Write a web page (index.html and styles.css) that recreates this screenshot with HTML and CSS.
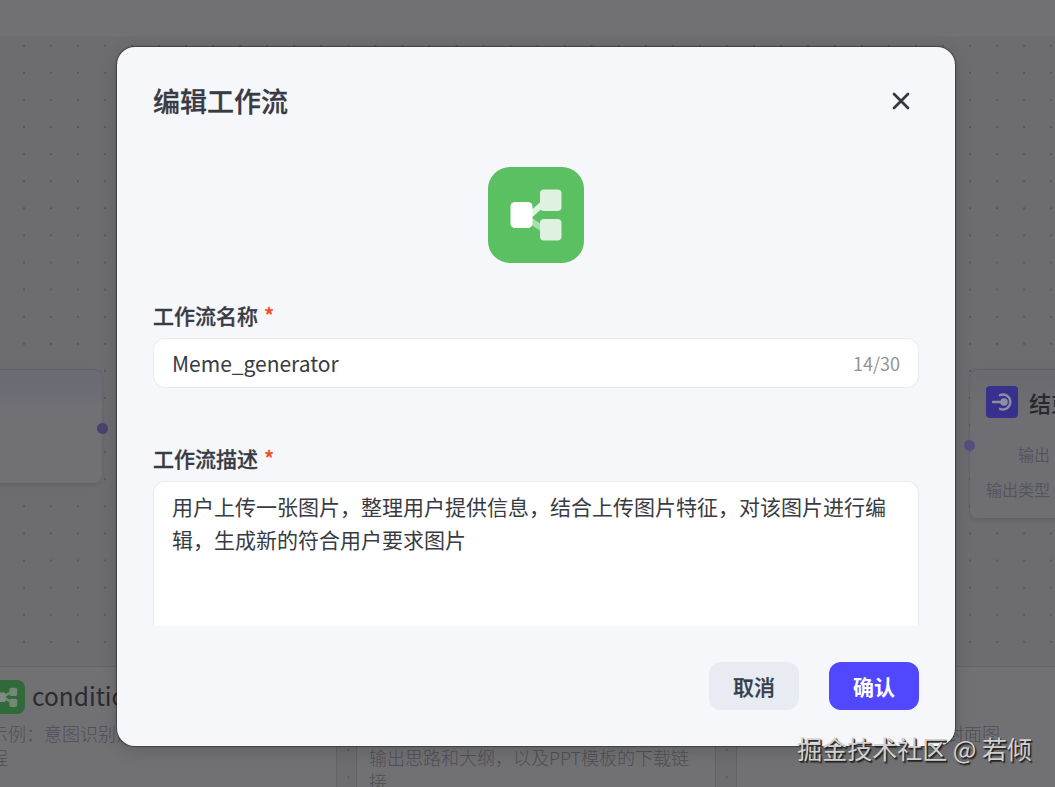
FILE: index.html
```
<!DOCTYPE html>
<html lang="zh-CN">
<head>
    <meta charset="UTF-8">
    <meta name="viewport" content="width=device-width, initial-scale=1.0">
    <title>编辑工作流</title>
    <link rel="stylesheet" href="styles.css">
</head>
<body>
    <div class="canvas">
        <div class="topbar"></div>

        <div class="node node-start"></div>
        <span class="port port-out"></span>

        <div class="node node-end">
            <div class="node-head">
                <svg class="end-icon" viewBox="0 0 32 32">
                    <rect width="32" height="32" rx="4" fill="#37308c"/>
                    <path d="M14 9.2A7.4 7.4 0 1 1 14 22.8M7 16h8" fill="none" stroke="#8d8da4" stroke-width="2.4" stroke-linecap="round"/>
                    <circle cx="18" cy="16" r="3.8" fill="#8d8da4"/>
                </svg>
                <span>结束</span>
            </div>
            <div class="node-row">输出</div>
            <div class="node-row">输出类型</div>
        </div>
        <span class="port port-in"></span>

        <div class="card card-left">
            <div class="card-head">
                <svg class="card-icon" viewBox="0 0 96 96">
                    <rect width="96" height="96" rx="22" fill="#30693a"/>
                    <path d="M34 48L62 31M34 48L62 65" stroke="#728975" stroke-width="7"/>
                    <rect x="52" y="22" width="22" height="23" rx="5" fill="#728975"/>
                    <rect x="52" y="53" width="22" height="23" rx="5" fill="#728975"/>
                    <rect x="12" y="35" width="30" height="27" rx="5" fill="#838984"/>
                </svg>
                <span>condition</span>
            </div>
            <p class="card-desc">示例：意图识别流<br>程</p>
        </div>
        <div class="card card-middle">
            <p class="card-desc">输出思路和大纲，以及PPT模板的下载链<br>接</p>
        </div>
        <div class="card card-right">
            <p class="card-desc">封面图</p>
        </div>
    </div>

    <div class="modal">
        <div class="modal-header">
            <h1>编辑工作流</h1>
            <button class="close" type="button" aria-label="关闭">
                <svg viewBox="0 0 20 20">
                    <path d="M3 3L17 17M17 3L3 17" stroke="#34373d" stroke-width="2.7" stroke-linecap="round"/>
                </svg>
            </button>
        </div>

        <svg class="logo" viewBox="0 0 96 96">
            <rect width="96" height="96" rx="22" fill="#5bc062"/>
            <path d="M40 52L58 64" stroke="#aadfae" stroke-width="6"/>
            <path d="M40 50L58 34" stroke="#def2df" stroke-width="6"/>
            <rect x="52" y="22.5" width="21.5" height="21.5" rx="4" fill="#def2df"/>
            <rect x="52" y="52" width="21.5" height="21.5" rx="4" fill="#def2df"/>
            <rect x="22.5" y="35" width="22" height="26" rx="4.5" fill="#fff"/>
        </svg>

        <form class="form">
            <div class="label">工作流名称<span class="required">*</span></div>
            <div class="input">
                <span>Meme_generator</span>
                <span class="count">14/30</span>
            </div>
            <div class="label">工作流描述<span class="required">*</span></div>
            <div class="textarea">用户上传一张图片，整理用户提供信息，结合上传图片特征，对该图片进行编辑，生成新的符合用户要求图片</div>
        </form>

        <div class="modal-footer">
            <button class="btn" type="button">取消</button>
            <button class="btn btn-primary" type="button">确认</button>
        </div>
    </div>

    <div class="watermark">掘金技术社区 @ 若倾</div>
</body>
</html>
```
FILE: styles.css
```
* {
    box-sizing: border-box;
}
body {
    margin: 0;
    height: 787px;
    overflow: hidden;
    position: relative;
    font-family: "Noto Sans CJK SC", sans-serif;
    color: #383b43;
}
button {
    font-family: inherit;
    border: none;
    padding: 0;
    cursor: pointer;
}
p {
    margin: 0;
}

/* canvas behind the dialog */
.canvas {
    position: absolute;
    inset: 0;
    overflow: hidden;
    background-color: #6d6c71;
    background-image: radial-gradient(circle, #57575c 0.7px, transparent 1.1px);
    background-size: 27.04px 27.1px;
    background-position: 10.5px 32.2px;
}
.topbar {
    height: 37px;
    background: #717075;
    border-bottom: 1px solid #6f6e73;
}
.node {
    position: absolute;
    border-radius: 8px;
    border-top: 1px solid #606066;
    box-shadow: 0 2px 5px rgba(0, 0, 0, 0.12);
}
.node-start {
    left: -20px;
    top: 369px;
    width: 122px;
    height: 114px;
    background: linear-gradient(#6a6a75, #6e6e75 30px, #717175 36px);
}
.node-end {
    left: 970px;
    top: 369px;
    width: 180px;
    height: 149px;
    padding: 16px 15px;
    background: linear-gradient(#69696f, #6f6f73 50px);
}
.node-head {
    display: flex;
    align-items: center;
    gap: 11px;
    height: 32px;
    margin: 0 0 19px 1px;
    font-size: 22px;
    font-weight: 500;
    color: #28282c;
}
.end-icon {
    flex: none;
    width: 32px;
    height: 32px;
}
.node-row {
    width: 65px;
    height: 35px;
    line-height: 35px;
    font-size: 16px;
    text-align: right;
    color: #55555b;
}
.port {
    position: absolute;
    width: 11px;
    height: 11px;
    border-radius: 50%;
}
.port-out {
    left: 97px;
    top: 423px;
    background: #48436f;
}
.port-in {
    left: 964px;
    top: 440px;
    background: #55517f;
}
.card {
    position: absolute;
    top: 666px;
    height: 140px;
    background: #717174;
    border: 1px solid #626267;
}
.card-left {
    left: -30px;
    width: 367px;
    padding: 12px 20px;
}
.card-middle {
    left: 356px;
    width: 360px;
    padding: 78px 12px 0;
}
.card-right {
    left: 736px;
    width: 350px;
    padding: 54px 0 0 209px;
}
.card-head {
    display: flex;
    align-items: center;
    gap: 7px;
    height: 36px;
    font-size: 24.5px;
    color: #2b2b2f;
}
.card-head span {
    margin-top: -4px;
}
.card-icon {
    width: 34px;
    height: 34px;
}
.card-desc {
    font-size: 18px;
    line-height: 24px;
    font-weight: 300;
    color: #4f4f54;
}
.card-left .card-desc {
    margin: 6px 0 0 -1px;
}

/* dialog */
.modal {
    position: absolute;
    left: 117px;
    top: 47px;
    width: 838px;
    height: 699px;
    padding: 36px;
    display: flex;
    flex-direction: column;
    background: #f6f7fb;
    border-radius: 18px;
    box-shadow: 0 0 1px 1px rgba(30, 30, 35, 0.5), 0 4px 18px rgba(0, 0, 0, 0.16);
}
.modal-header {
    display: flex;
    justify-content: space-between;
    align-items: center;
    height: 36px;
}
.modal-header h1 {
    margin: 0;
    font-size: 27px;
    font-weight: 500;
    line-height: 36px;
    -webkit-text-stroke: 0.3px;
}
.close {
    width: 36px;
    height: 36px;
    display: flex;
    align-items: center;
    justify-content: center;
    background: none;
}
.close svg {
    width: 20px;
    height: 20px;
}
.logo {
    flex: none;
    width: 96px;
    height: 96px;
    margin: 48px auto 37px;
}
.label {
    height: 30px;
    margin-bottom: 8px;
    font-size: 21px;
    line-height: 30px;
    font-weight: 500;
    -webkit-text-stroke: 0.3px;
}
.required {
    margin-left: 6px;
    color: #f54b23;
}
.input {
    display: flex;
    justify-content: space-between;
    align-items: center;
    height: 50px;
    margin-bottom: 55px;
    padding: 0 18px;
    background: #fff;
    border: 1px solid #e9eaef;
    border-radius: 12px;
    font-size: 21px;
}
.count {
    font-size: 18px;
    color: #92939a;
}
.textarea {
    height: 145px;
    padding: 8px 18px;
    background: #fff;
    border: 1px solid #e9eaef;
    border-bottom: none;
    border-radius: 12px 12px 0 0;
    font-size: 21px;
    line-height: 33px;
}
.modal-footer {
    display: flex;
    justify-content: flex-end;
    gap: 30px;
    margin-top: auto;
}
.btn {
    width: 90px;
    height: 48px;
    border-radius: 12px;
    background: #e8ebf2;
    color: #343e4d;
    font-size: 21px;
    line-height: 48px;
    font-weight: 500;
    -webkit-text-stroke: 0.3px;
}
.btn-primary {
    background: #5147ff;
    color: #fff;
    font-weight: 700;
    -webkit-text-stroke: 0;
}

.watermark {
    position: absolute;
    right: 23px;
    bottom: 21px;
    font-size: 25px;
    line-height: 36px;
    color: #d2d1d1;
    text-shadow: 1px 1px 1px #222, 1.5px 1.5px 1px #333;
    white-space: nowrap;
}
```
